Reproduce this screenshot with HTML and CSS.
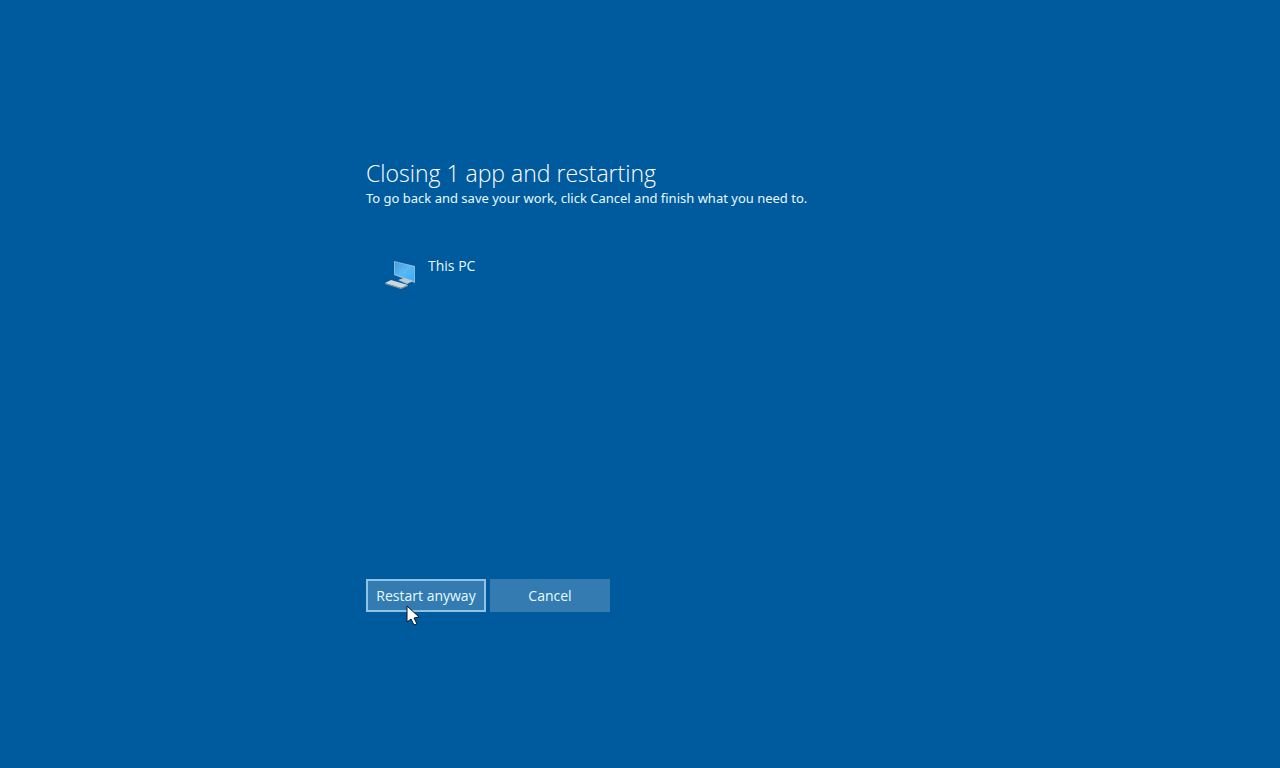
FILE: index.html
```
<!DOCTYPE html>
<html lang="en">
<head>
    <meta charset="UTF-8">
    <meta name="viewport" content="width=device-width, initial-scale=1.0">
    <title>Restarting</title>
    <link rel="stylesheet" href="styles.css">
</head>
<body>

    <main class="shutdown">
        <h1>Closing 1 app and restarting</h1>
        <p class="hint">To go back and save your work, click Cancel and finish what you need to.</p>

        <ul class="apps">
            <li>
                <svg class="app-icon" width="32" height="32" viewBox="0 0 32 32" aria-hidden="true">
                    <defs>
                        <linearGradient id="screen" x1="0" y1="0" x2="1" y2="1">
                            <stop offset="0" stop-color="#3f9fe0"/>
                            <stop offset="0.5" stop-color="#5cb8f4"/>
                            <stop offset="1" stop-color="#2fb0fa"/>
                        </linearGradient>
                    </defs>
                    <path d="M9 3 L30 8 L30 25 L27 24 L9 17 Z" fill="#8db7d3"/>
                    <path d="M10 4 L29 9 L29 23 L10 16 Z" fill="url(#screen)"/>
                    <path d="M13 22 L19 20 L28 23 L22 26 Z" fill="#b9cad2"/>
                    <path d="M0 25 L6 22 L23 27 L16 30 Z" fill="#d2d8da"/>
                    <path d="M0 25 L16 30 L23 27 L23 28 L16 31 L0 26 Z" fill="#8f9ba3"/>
                </svg>
                <span>This PC</span>
            </li>
        </ul>

        <div class="actions">
            <button type="button" class="focused">Restart anyway</button>
            <button type="button">Cancel</button>
            <svg class="cursor" width="14" height="21" viewBox="0 0 14 21" aria-hidden="true">
                <path d="M1 1 L1 17 L5 14 L8 20 L11 19 L8 13 L13 12 Z" fill="#fff" stroke="#06182c" stroke-width="1"/>
            </svg>
        </div>
    </main>

</body>
</html>
```

FILE: styles.css
```
* { box-sizing: border-box; }
body { margin: 0; background-color: #005a9e; color: #e6fbff; font-family: "Segoe UI", "Open Sans", "Noto Sans", sans-serif; font-size: 14px; line-height: 20px; }
h1 { margin: 0; font-size: 23px; font-weight: 300; line-height: 30px; color: #fff; }

.shutdown { max-width: 548px; min-height: 100vh; margin: 0 auto; padding: 158px 0 48px; }
.hint { margin: 0; font-family: "Segoe UI", "Noto Sans", sans-serif; font-size: 13px; }

.apps { list-style: none; min-height: 323px; margin: 0; padding: 48px 0 0 19px; }
.apps li { display: flex; align-items: flex-start; gap: 11px; }
.app-icon { margin-top: 2px; }

.actions { position: relative; display: flex; gap: 4px; margin-top: 48px; }
.actions button { width: 120px; height: 33px; padding: 0; border: 2px solid #337bb1; background-color: #337bb1; color: inherit; font: inherit; white-space: nowrap; }
.actions .focused { border-color: #8fc3e4; }

/* mouse pointer resting on the focused button */
.cursor { position: absolute; left: 40px; top: 26px; pointer-events: none; }
```
